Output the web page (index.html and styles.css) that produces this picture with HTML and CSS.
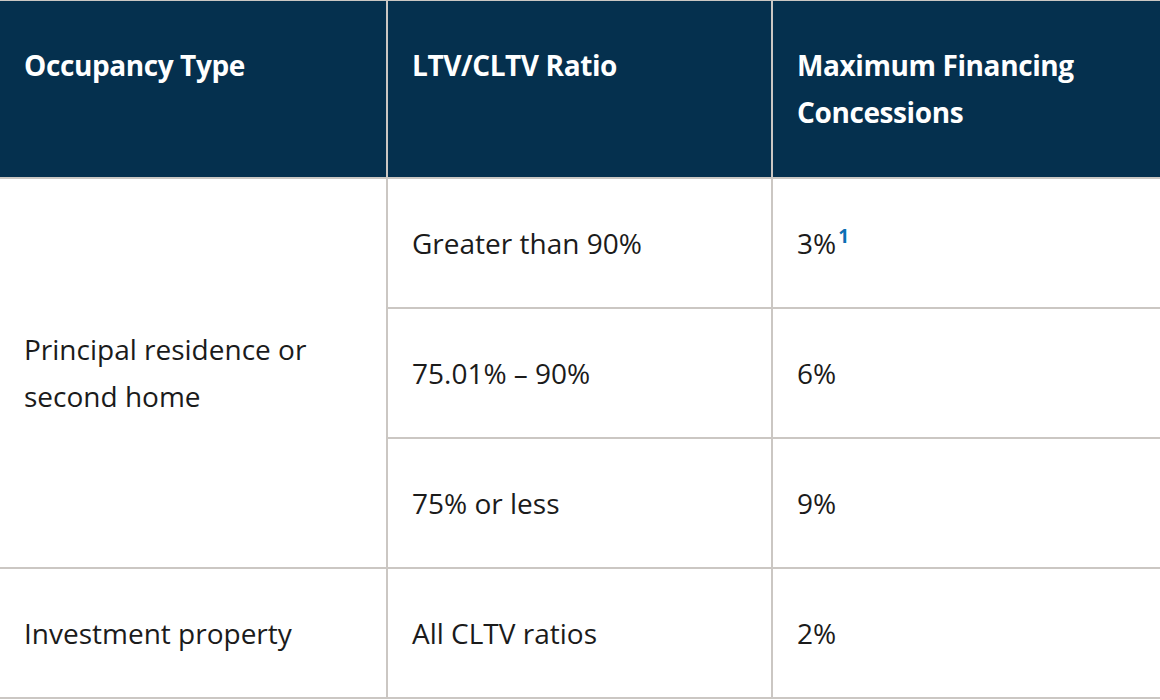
FILE: index.html
```html
<!DOCTYPE html>
<html lang="en">
<head>
<meta charset="utf-8">
<title>Financing Concessions</title>
<link rel="stylesheet" href="styles.css">
</head>
<body>
<table class="grid">
  <colgroup>
    <col class="c1">
    <col class="c2">
    <col class="c3">
  </colgroup>
  <thead>
    <tr class="head">
      <th>Occupancy Type</th>
      <th>LTV/CLTV Ratio</th>
      <th class="last">Maximum Financing Concessions</th>
    </tr>
  </thead>
  <tbody>
    <tr class="row">
      <td rowspan="3">Principal residence or second home</td>
      <td>Greater than 90%</td>
      <td class="last">3%<sup class="note">1</sup></td>
    </tr>
    <tr class="row">
      <td>75.01% – 90%</td>
      <td class="last">6%</td>
    </tr>
    <tr class="row">
      <td>75% or less</td>
      <td class="last">9%</td>
    </tr>
    <tr class="row">
      <td>Investment property</td>
      <td>All CLTV ratios</td>
      <td class="last">2%</td>
    </tr>
  </tbody>
</table>
</body>
</html>
```
FILE: styles.css
```css
html, body {
  margin: 0;
  padding: 0;
  background: #ffffff;
}

body {
  font-family: "Open Sans", "Liberation Sans", sans-serif;
  color: #1b1b1b;
  overflow: hidden;
}

.grid {
  width: 1160px;
  table-layout: fixed;
  border-collapse: separate;
  border-spacing: 0;
  border-top: 1px solid #cbc7c3;
}

.c1 { width: 388px; }
.c2 { width: 385px; }
.c3 { width: 387px; }

.grid th,
.grid td {
  text-align: left;
  vertical-align: middle;
  padding: 0 24px;
  font-size: 28px;
  line-height: 47px;
  border-right: 2px solid #cbc7c3;
  border-bottom: 2px solid #cbc7c3;
}

.grid .last {
  border-right: none;
}

.head th {
  height: 135px;
  padding-top: 41px;
  vertical-align: top;
  background: #05304e;
  color: #ffffff;
  font-weight: 700;
  letter-spacing: -0.4px;
}

.row td {
  height: 128px;
  font-weight: 400;
}

.note {
  color: #0b6fb4;
  font-weight: 700;
  font-size: 19px;
  line-height: 0;
  vertical-align: 11px;
  margin-left: 2px;
}
```
